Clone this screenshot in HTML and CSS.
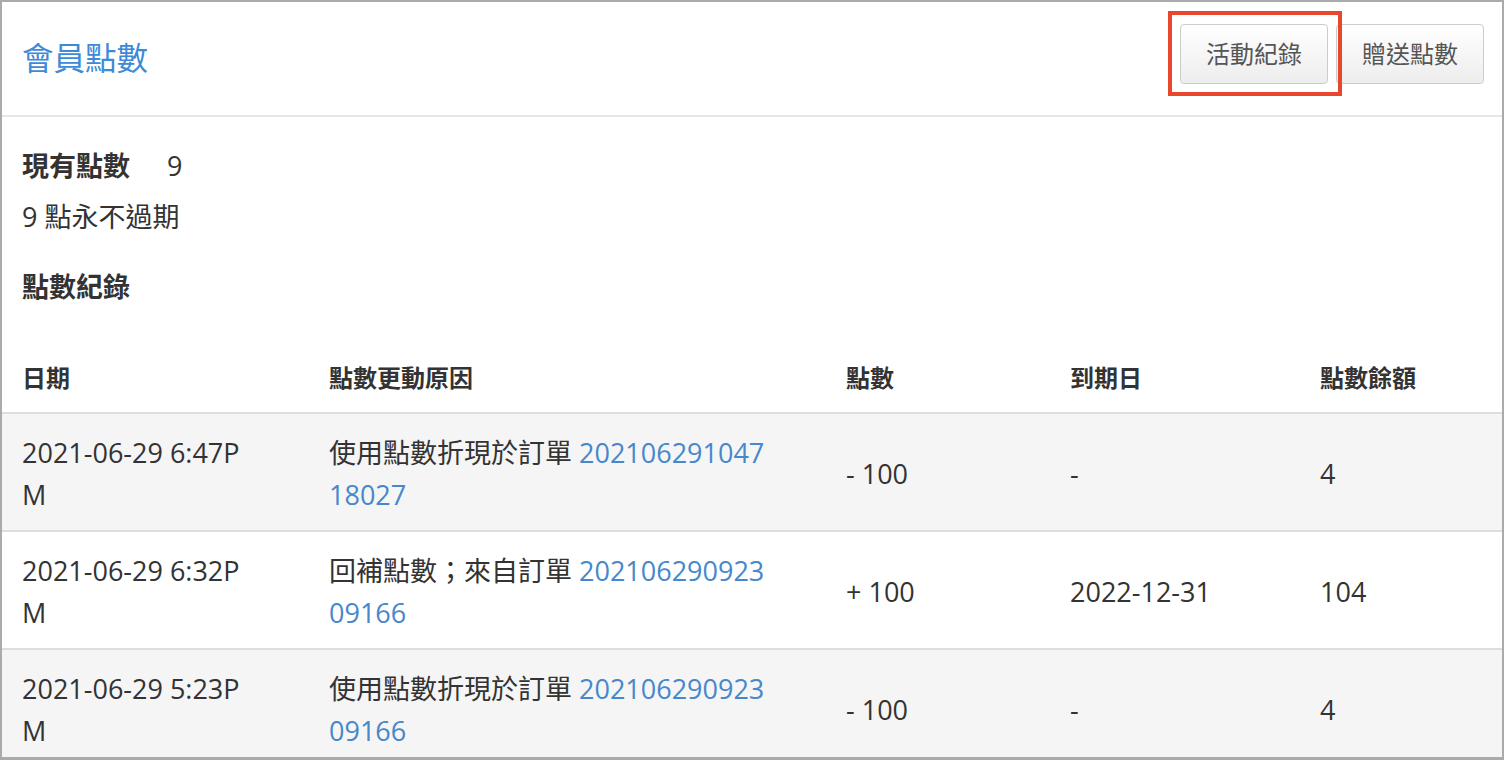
FILE: index.html
```html
<!DOCTYPE html>
<html lang="zh-Hant">
<head>
  <meta charset="UTF-8">
  <meta name="viewport" content="width=device-width, initial-scale=1.0">
  <title>會員點數</title>
  <link rel="stylesheet" href="styles.css">
</head>
<body>
  <div class="panel">
    <!-- Header -->
    <div class="panel-header">
      <h1 class="panel-title">會員點數</h1>
      <div class="actions">
        <button class="btn btn-marked">活動紀錄</button>
        <button class="btn">贈送點數</button>
      </div>
    </div>

    <!-- Summary -->
    <div class="summary">
      <p><span class="summary-label">現有點數</span>9</p>
      <p>9 點永不過期</p>
      <p class="record-title">點數紀錄</p>
    </div>

    <!-- Records -->
    <table class="records">
      <thead>
        <tr>
          <th class="col-date">日期</th>
          <th class="col-reason">點數更動原因</th>
          <th class="col-points">點數</th>
          <th class="col-expire">到期日</th>
          <th class="col-balance">點數餘額</th>
        </tr>
      </thead>
      <tbody>
        <tr>
          <td class="wrap">2021-06-29 6:47PM</td>
          <td class="wrap">使用點數折現於訂單 <a href="#">20210629104718027</a></td>
          <td>- 100</td>
          <td>-</td>
          <td>4</td>
        </tr>
        <tr>
          <td class="wrap">2021-06-29 6:32PM</td>
          <td class="wrap">回補點數；來自訂單 <a href="#">20210629092309166</a></td>
          <td>+ 100</td>
          <td>2022-12-31</td>
          <td>104</td>
        </tr>
        <tr>
          <td class="wrap">2021-06-29 5:23PM</td>
          <td class="wrap">使用點數折現於訂單 <a href="#">20210629092309166</a></td>
          <td>- 100</td>
          <td>-</td>
          <td>4</td>
        </tr>
      </tbody>
    </table>
  </div>
</body>
</html>
```

FILE: styles.css
```css
body {
  margin: 0;
  font-family: 'Open Sans', 'Noto Sans CJK TC', sans-serif;
  color: #333;
  background: #fff;
  overflow: hidden;
}
.panel {
  box-sizing: border-box;
  height: 760px;
  border: 2px solid #aaa;
  border-bottom-width: 3px;
  overflow: hidden;
}
.panel-header {
  display: flex;
  justify-content: space-between;
  align-items: center;
  height: 113px;
  padding: 0 18px 0 20px;
  border-bottom: 2px solid #e6e6e6;
}
.panel-title {
  margin: -6px 0 0;
  font-size: 31.5px;
  font-weight: normal;
  color: #3d8ad8; /* Blue */
}
.actions {
  display: flex;
  gap: 8px;
  margin-top: -10px;
}
.btn {
  font-family: inherit;
  font-size: 24px;
  line-height: 34px;
  color: #555;
  padding: 12px 25px;
  border: 1px solid #ccc;
  border-radius: 4px;
  background: linear-gradient(#ffffff, #ededed);
  cursor: pointer;
}
.btn:hover {
  background: #e6e6e6;
}
/* red annotation box drawn over the first button */
.btn-marked {
  position: relative;
}
.btn-marked::after {
  content: '';
  position: absolute;
  top: -14px;
  left: -13px;
  right: -15px;
  bottom: -13px;
  border: 4px solid #e8472e;
  pointer-events: none;
}
.summary {
  padding: 23px 20px 0;
  font-size: 27px;
}
.summary p {
  margin: 0;
  line-height: 51px;
}
.summary-label {
  font-weight: bold;
  margin-right: 37px;
}
.record-title {
  font-weight: bold;
  margin-top: 19px !important;
}
.records {
  width: 100%;
  margin-top: 32px;
  border-collapse: collapse;
  table-layout: fixed;
  font-size: 27px;
}
.records th {
  text-align: left;
  font-size: 24px;
  font-weight: bold;
  line-height: 36px;
  padding: 16px 20px 16px;
}
.records td {
  line-height: 42px;
  padding: 18px 20px 14px;
  border-top: 2px solid #ddd;
  vertical-align: middle;
}
.records tbody tr:nth-child(odd) {
  background: #f5f5f5;
}
.col-date {
  width: 230px;
  padding-right: 57px !important;
}
.col-reason {
  width: 443px;
  padding-right: 54px !important;
}
.col-points {
  width: 184px;
}
.col-expire {
  width: 210px;
}
.col-balance {
  width: 162px;
}
.wrap {
  word-break: break-all;
}
.records td:nth-child(1) {
  padding-right: 57px;
}
.records td:nth-child(2) {
  padding-right: 54px;
}
a {
  color: #4787cc;
  text-decoration: none;
}
a:hover {
  text-decoration: underline;
}
```
